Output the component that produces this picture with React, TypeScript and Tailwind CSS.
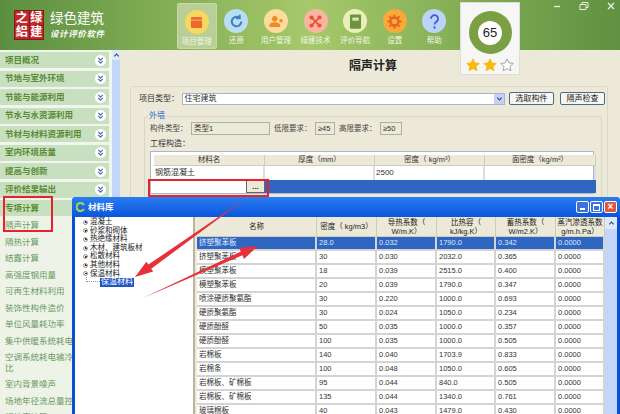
const font = { fontFamily: '"Liberation Sans","Noto Sans CJK SC",sans-serif' };

const sideTop = ["项目概况","节地与室外环境","节能与能源利用","节水与水资源利用","节材与材料资源利用","室内环境质量","提高与创新","评价结果输出"];
const sideSub = ["隔声计算","隔热计算","结露计算","高强度钢用量","可再生材料利用","装饰性构件造价","单位风量耗功率","集中供暖系统耗电","空调系统耗电输冷\n比","室内背景噪声","场地年径流总量控","绿地率计算"];

const nav = [
  { label: "项目管理", bg: "bg-[#f7d860]", active: true, icon: <g><rect x="5" y="5" width="14" height="14" rx="1.5" fill="#ee6a2a" /><path d="M5 9h14" stroke="#f9c9a0" strokeWidth="1" /></g> },
  { label: "还原", bg: "bg-[#b9def0]", icon: <path d="M18 12a6 6 0 1 1-2.4-4.8M16 3.5v4.5h-4.5" fill="none" stroke="#3b7fc4" strokeWidth="2.6" /> },
  { label: "用户管理", bg: "bg-[#fbdc9c]", icon: <path d="M11 5a3.6 3.6 0 1 1-.01 0ZM4 19c0-5 3-6 7-6s7 1 7 6ZM17 9h4v4h-4Z" fill="#ef8a25" /> },
  { label: "绿建技术", bg: "bg-[#f8b5a0]", icon: <g fill="#e8503c"><path d="M8 8l8 8M16 8l-8 8" stroke="#e8503c" strokeWidth="2" /><circle cx="7" cy="7" r="2.6" /><circle cx="17" cy="7" r="2.6" /><circle cx="7" cy="17" r="2.6" /><circle cx="17" cy="17" r="2.6" /></g> },
  { label: "评价导航", bg: "bg-[#e8efb8]", icon: <g><rect x="5" y="3" width="14" height="18" rx="1.5" fill="#6f9440" /><path d="M8 7h8v4H8z" fill="#dbe6b8" /></g> },
  { label: "设置", bg: "bg-[#f9a83a]", icon: <g fill="none" stroke="#e8641e"><circle cx="12" cy="12" r="5" strokeWidth="3" /><path d="M12 3v4M12 17v4M3 12h4M17 12h4M5.6 5.6l2.8 2.8M15.6 15.6l2.8 2.8M18.4 5.6l-2.8 2.8M8.4 15.6l-2.8 2.8" strokeWidth="2.4" /></g> },
  { label: "帮助", bg: "bg-[#bcd3f8]", icon: <path d="M7.5 8.5a4.5 4.5 0 1 1 7 3.7c-1.7 1.1-2.5 1.8-2.5 3.6M12 18v3" fill="none" stroke="#3d57d6" strokeWidth="2.2" /> },
];

const rows = [
  ["挤塑聚苯板","28.0","0.032","1790.0","0.342"],
  ["挤塑聚苯板","30","0.030","2032.0","0.365"],
  ["模塑聚苯板","18","0.039","2515.0","0.400"],
  ["模塑聚苯板","20","0.039","1790.0","0.347"],
  ["喷涂硬质聚氨酯","30","0.220","1000.0","0.693"],
  ["硬质聚氨酯","30","0.024","1050.0","0.234"],
  ["硬质酚醛","50","0.035","1000.0","0.357"],
  ["硬质酚醛","100","0.035","1000.0","0.505"],
  ["岩棉板","140","0.040","1703.9","0.833"],
  ["岩棉条","100","0.048","1050.0","0.605"],
  ["岩棉板、矿棉板","95","0.044","840.0","0.505"],
  ["岩棉板、矿棉板","135","0.044","1340.0","0.761"],
  ["玻璃棉板","40","0.043","1479.0","0.430"],
];
const tree = ["混凝土","砂浆和砌体","热绝缘材料","木材、建筑板材","松散材料","其他材料"];

function Chevron() {
  return (
    <span className="flex h-[11px] w-[11px] items-center justify-center rounded-full bg-white">
      <svg viewBox="0 0 10 10" className="h-[9px] w-[9px]"><path d="M2.5 2 5 4.5 7.5 2M2.5 5.5 5 8l2.5-2.5" fill="none" stroke="#4a6fb5" strokeWidth="1.3" /></svg>
    </span>
  );
}

function Star({ on }: { on: boolean }) {
  return (
    <svg viewBox="0 0 24 24" className="h-[14px] w-[14px]">
      <path d="M12 1.5l3.2 7 7.6.8-5.7 5.1 1.7 7.5L12 18l-6.8 3.9 1.7-7.5L1.2 9.3l7.6-.8Z" fill={on ? "#f9b80c" : "#fff"} stroke={on ? "#f9b80c" : "#9a9a9a"} strokeWidth="1.5" />
    </svg>
  );
}

function Field({ label, value, w }: { label: string; value: string; w: string }) {
  return (
    <div className="flex items-center">
      <span className="w-[41px] whitespace-nowrap text-[7.5px] text-[#444]">{label}</span>
      <span className={`flex h-[13px] items-center border border-[#a9b3a5] bg-[#ece9d8] px-[2px] text-[7.5px] text-[#333] ${w}`}>{value}</span>
    </div>
  );
}

function Btn({ children }: { children: string }) {
  return <button className="flex h-[13px] w-[45px] items-center justify-center rounded-[2px] border border-[#4a6a8c] bg-[#f7f6f0] text-[8px] text-[#222]">{children}</button>;
}

function Plus({ open }: { open?: boolean }) {
  return (
    <span className="relative mr-[2px] h-[5px] w-[5px] shrink-0 rounded-full border border-[#999] bg-[#eee]">
      <span className="absolute left-[0.5px] top-[1px] h-px w-[2px] bg-[#333]" />
      {!open && <span className="absolute left-[1px] top-[0.5px] h-[2px] w-px bg-[#333]" />}
    </span>
  );
}

export default function App() {
  return (
    <div className="relative flex h-[414px] w-[620px] flex-col overflow-hidden bg-[#ece9d8]" style={font}>
      {/* header */}
      <header className="relative flex h-[50px] shrink-0 items-stretch bg-gradient-to-r from-[#5b8f3f] via-[#a6c96a] to-[#5f9140]">
        <div className="flex w-[177px] shrink-0 items-center pl-[14px]">
          <div className="grid h-[30px] w-[30px] grid-cols-2 gap-[1px] bg-[#7a1f1c] p-px text-[12px] font-bold leading-none text-white">
            {["之","绿","絽","建"].map((c) => <span key={c} className="flex items-center justify-center bg-[#c8242a]">{c}</span>)}
          </div>
          <div className="ml-[6px] text-white">
            <div className="text-[13.5px] leading-[16px]">绿色建筑</div>
            <div className="mt-[2px] text-[8.5px] font-bold italic leading-[10px] tracking-[0.6px]">设计评价软件</div>
          </div>
        </div>
        <nav className="flex h-[50px] pb-px pt-[3px]">
          {nav.map((n) => (
            <div key={n.label} className={`flex w-[39.6px] flex-col items-center rounded-[2px] pt-[6px] ${n.active ? "border border-[#c9d9a6] bg-[#b9cf96]" : ""}`}>
              <span className={`flex h-[24px] w-[24px] items-center justify-center rounded-full ${n.bg}`}>
                <svg viewBox="0 0 24 24" className="h-[19px] w-[19px]">{n.icon}</svg>
              </span>
              <span className="mt-[3px] whitespace-nowrap text-[7.5px] leading-[10px] text-[#f2f6e4]">{n.label}</span>
            </div>
          ))}
        </nav>
        <div className="ml-auto flex items-start gap-[17px] pr-[4px] pt-px text-[#e8f0dc]">
          <svg viewBox="0 0 10 10" className="h-[10px] w-[10px]"><path d="M2 5.5h6" stroke="currentColor" strokeWidth="1.4" /></svg>
          <svg viewBox="0 0 10 10" className="h-[10px] w-[10px]"><path d="M1 3.5h6v5H1zM3 3.5V1.5h6v5H7" fill="none" stroke="currentColor" strokeWidth="1" /></svg>
          <svg viewBox="0 0 10 10" className="h-[10px] w-[10px]"><path d="M2 2l6 6M8 2l-6 6" stroke="currentColor" strokeWidth="1.4" /></svg>
        </div>
      </header>

      {/* score card */}
      <div className="absolute left-[460px] top-[2px] z-10 flex h-[73px] w-[60px] flex-col items-center border border-[#dcdcdc] bg-[#f6f6f4] pt-[8px]">
        <div className="flex h-[43px] w-[43px] items-center justify-center rounded-full bg-[#7a9f45]">
          <span className="flex h-[24px] w-[24px] items-center justify-center rounded-full bg-white text-[13px] text-[#222]">65</span>
        </div>
        <div className="mt-[4px] flex gap-[3px]"><Star on /><Star on /><Star on={false} /></div>
      </div>

      <div className="flex min-h-0 flex-1">
        {/* sidebar */}
        <aside className="flex w-[120px] shrink-0 bg-[#f2f5ec]">
          <div className="w-[112px] pr-[3px] pt-[2px]">
            {sideTop.map((s) => (
              <div key={s} className="mb-[2.5px] flex h-[16px] items-center justify-between bg-[#c8e0bf] pl-[5px] pr-[3px] text-[8.5px] font-bold text-[#5a8a35]">
                {s}<Chevron />
              </div>
            ))}
            <div className="-mr-[3px] bg-[#eef3e8]">
              <div className="flex h-[16px] items-center bg-[#c8e0bf] pl-[5px] text-[8.5px] font-bold text-[#5a8a35]">专项计算</div>
              <div className="pl-[5px] pt-[1px] text-[8.5px] leading-[16.5px] text-[#6b9a62]">
                {sideSub.map((s) => (
                  <div key={s} className={s.includes("\n") ? "whitespace-pre-line leading-[10.5px] py-[3px]" : "whitespace-nowrap"}>{s}</div>
                ))}
              </div>
            </div>
          </div>
          <div className="flex w-[8px] flex-col items-center bg-[#c3d6fa]">
            <span className="flex h-[10px] w-full items-center justify-center rounded-[1px] bg-[#dfe9fc]">
              <svg viewBox="0 0 8 8" className="h-[7px] w-[7px]"><path d="M1.5 5 4 2.5 6.5 5" fill="none" stroke="#34507f" strokeWidth="1.4" /></svg>
            </span>
          </div>
        </aside>

        {/* main */}
        <main className="min-w-0 flex-1 pl-[10px] pr-[12px]">
          <h1 className="mt-[8px] pl-[219px] text-[12px] font-bold leading-[16px] text-[#222]">隔声计算</h1>
          <section className="mt-[12px] h-[300px] rounded-[3px] border border-[#dcd9c8] pl-[8px] pr-[2px] pt-[5px]">
            <div className="flex items-center">
              <span className="w-[43px] text-[8px] text-[#333]">项目类型：</span>
              <div className="flex h-[12px] w-[327px] items-center justify-between border border-[#a7b4c4] bg-white pl-[2px] text-[8px] text-[#333]">
                住宅建筑
                <span className="flex h-[10px] w-[10px] items-center justify-center bg-[#c4d3f5]">
                  <svg viewBox="0 0 8 8" className="h-[7px] w-[7px]"><path d="M1.5 3 4 5.5 6.5 3" fill="none" stroke="#34507f" strokeWidth="1.4" /></svg>
                </span>
              </div>
              <div className="ml-[4px] flex gap-[6px]"><Btn>选取构件</Btn><Btn>隔声检查</Btn></div>
            </div>
            <div className="relative ml-[5px] mr-[3px] mt-[11px] h-[200px] rounded-[3px] border border-[#d8d5c4] pl-[5px] pr-[7px] pt-[5px]">
              <span className="absolute -top-[6px] left-[3px] bg-[#ece9d8] px-px text-[8px] leading-[10px] text-[#2a6bd0]">外墙</span>
              <div className="flex gap-[4px]">
                <Field label="构件类型：" value="类型1" w="w-[79px]" />
                <Field label="低限要求：" value="≥45" w="w-[20px]" />
                <Field label="高限要求：" value="≥50" w="w-[22px]" />
              </div>
              <div className="mt-[3px] text-[8px] leading-[12px] text-[#333]">工程构造：</div>
              <div className="mt-[1px] border border-[#a9b8cf] bg-white pl-[3px] pt-[3px]">
                <div className="grid grid-cols-[111px_110px_110px_111px] text-[7.5px] text-[#333]">
                  {["材料名","厚度（mm）","密度（ kg/m³）","面密度（kg/m²）"].map((h) => (
                    <div key={h} className="flex h-[11px] items-center justify-center border-b border-r border-[#cfccba] bg-[#ece9d8]">{h}</div>
                  ))}
                  {["钢筋混凝土","","2500",""].map((c, i) => (
                    <div key={i} className="flex h-[14px] items-center border-r-2 border-[#ddd] pl-px text-[8px]">{c}</div>
                  ))}
                  <div className="flex h-[13px] items-center justify-end bg-white">
                    <span className="flex h-[13px] w-[19px] items-center justify-center border border-[#666] bg-[#ece9d8] text-[8px] font-bold leading-none">...</span>
                  </div>
                  <div className="col-span-3 h-[13px] bg-[#2f66c2]" />
                </div>
              </div>
            </div>
          </section>
        </main>
      </div>

      {/* red annotation boxes */}
      <div className="absolute left-[3px] top-[196px] z-10 h-[36px] w-[50px] border-2 border-[#e8212b]" />
      <div className="absolute left-[148px] top-[179px] z-10 h-[18px] w-[121px] border-2 border-[#e8212b]" />

      {/* material library window */}
      <div className="absolute left-[72px] top-[197px] z-20 flex h-[230px] w-[548px] flex-col rounded-t-[4px] bg-[#0a4fd8]">
        <div className="flex h-[20px] shrink-0 items-center rounded-t-[4px] bg-gradient-to-b from-[#2a7df0] to-[#0a55dd] pl-[4px] pr-[3px]">
          <svg viewBox="0 0 10 10" className="h-[10px] w-[10px]"><path d="M8 3A4 4 0 1 0 8 7" fill="none" stroke="#a5d44a" strokeWidth="2.2" /></svg>
          <span className="ml-[2px] text-[8.5px] font-bold text-white">材料库</span>
          <div className="ml-auto flex gap-px">
            <span className="flex h-[12px] w-[13px] items-end justify-center rounded-[2px] border border-white bg-[#3d72d8] pb-[2px]"><span className="h-[2px] w-[5px] bg-white" /></span>
            <span className="flex h-[12px] w-[13px] items-center justify-center rounded-[2px] border border-white bg-[#3d72d8]"><span className="h-[7px] w-[7px] border border-t-2 border-white" /></span>
            <span className="flex h-[12px] w-[13px] items-center justify-center rounded-[2px] border border-white bg-[#e2573a] text-[10px] font-bold leading-none text-white">×</span>
          </div>
        </div>
        <div className="mx-[3px] flex min-h-0 flex-1 bg-[#ece9d8]">
          <div className="w-[120px] shrink-0 border-r-2 border-[#b8b5a5] bg-white pl-[8px] pt-[1px] text-[7.5px] leading-[8.6px] text-[#222]">
            {tree.map((t) => <div key={t} className="flex items-center"><Plus />{t}</div>)}
            <div className="flex items-center"><Plus open />保温材料</div>
            <div className="flex items-center pl-[3px]">
              <span className="h-[5px] w-[14px] -translate-y-[3px] border-b border-l border-dotted border-[#999]" />
              <span className="bg-[#1f56c4] px-px text-[8px] text-white">保温材料</span>
            </div>
          </div>
          <div className="ml-[2px] min-w-0 flex-1">
            <div className="grid grid-cols-[120px_60px_60px_59px_60px_49px] bg-white text-[7.5px] text-[#222]">
              {["名称","密度（ kg/m3）","导热系数（\nW/m.K）","比热容（\nkJ/kg.K）","蓄热系数（\nW/m2.K）","蒸汽渗透系数\ng/m.h.Pa）"].map((h) => (
                <div key={h} className="flex h-[20px] items-center justify-center whitespace-pre-line border-b border-r border-[#cfccba] bg-[#ece9d8] text-center leading-[9px]">{h}</div>
              ))}
              {rows.map((r, ri) =>
                [...r, "0.0000"].map((c, ci) => (
                  <div key={`${ri}-${ci}`} className={`flex h-[14px] items-center border-b-2 border-r-2 border-[#d4d4d4] pl-[2px] ${ri === 0 ? "bg-[#2f66c2] text-[#dfe8f8]" : "bg-white text-[#333]"}`}>{c}</div>
                ))
              )}
            </div>
          </div>
          <div className="w-[12px] shrink-0 bg-[#c3d6fa]">
            <span className="flex h-[12px] items-center justify-center bg-[#dfe9fc]">
              <svg viewBox="0 0 8 8" className="h-[7px] w-[7px]"><path d="M1.5 5 4 2.5 6.5 5" fill="none" stroke="#34507f" strokeWidth="1.4" /></svg>
            </span>
          </div>
        </div>
      </div>

      {/* red arrows */}
      <svg className="pointer-events-none absolute left-0 top-0 z-30 h-[414px] w-[620px]" viewBox="0 0 620 414">
        <path d="M247 197.5 L151.2 268.8 L153.2 271.6 L135 277 L146.4 261.8 L148.4 264.6 Z" fill="#e8303a" />
        <path d="M143 298 L242.4 255.2 L244 258.9 L258 246 L239.1 247.9 L240.8 251.6 Z" fill="#e8303a" />
      </svg>
    </div>
  );
}
